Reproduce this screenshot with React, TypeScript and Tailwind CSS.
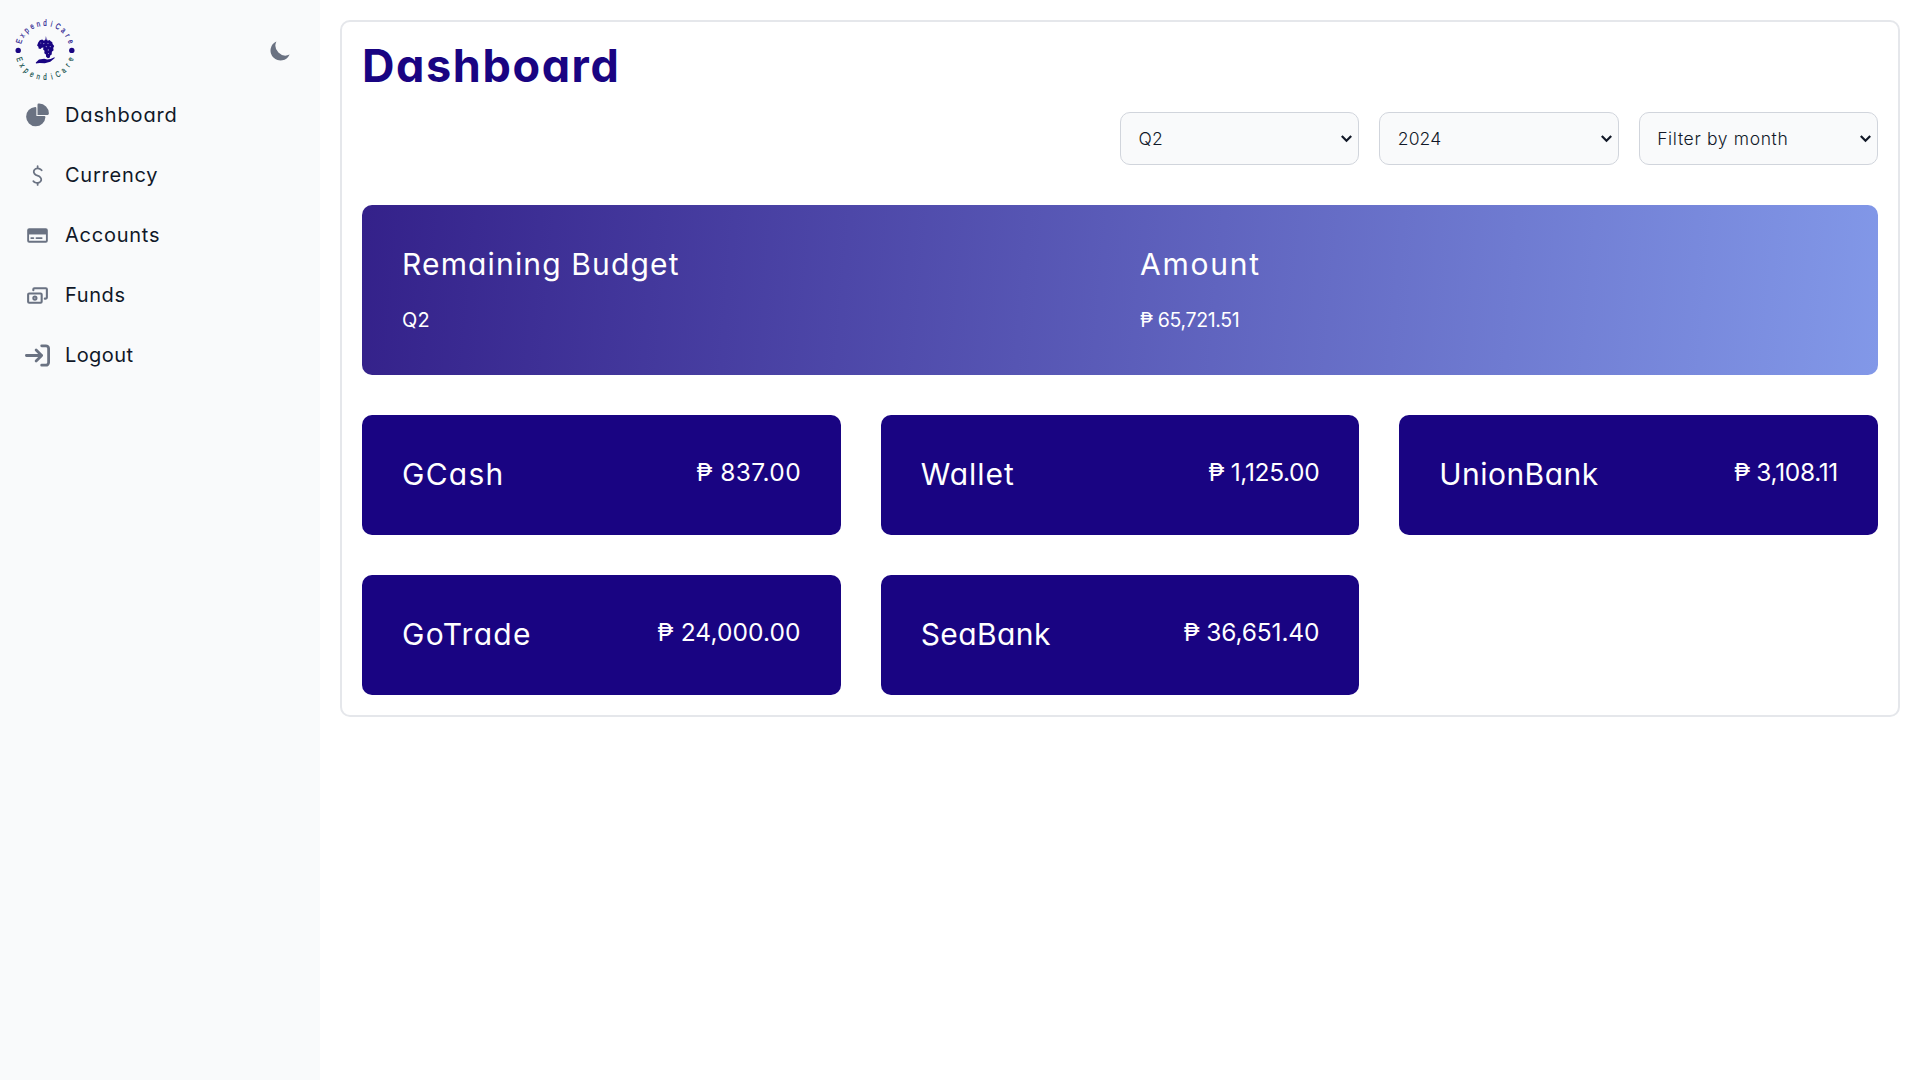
import type { ReactNode } from "react";

const stroke = {
  fill: "none",
  stroke: "currentColor",
  strokeLinecap: "round" as const,
  strokeLinejoin: "round" as const,
  strokeWidth: 2,
};

const brand = "ExpendiCare".split("");

function Logo() {
  return (
    <svg viewBox="0 0 70 70" className="h-[70px] w-[70px] font-['Liberation_Sans',sans-serif]">
      {brand.map((letter, i) => (
        <text
          key={`top-${i}`}
          fontSize="8.2"
          fill="#2c1c90"
          stroke="#2c1c90"
          strokeWidth="0.2"
          textAnchor="middle"
          transform={`translate(35 35.4) rotate(${(i - 5) * 14.2}) translate(0 -24.6) scale(0.76 1)`}
        >
          {letter}
        </text>
      ))}
      {brand.map((letter, i) => (
        <text
          key={`bottom-${i}`}
          fontSize="8.2"
          fill="#15524e"
          stroke="#15524e"
          strokeWidth="0.2"
          textAnchor="middle"
          transform={`translate(35 35.4) rotate(${(5 - i) * 14.2}) translate(0 29.8) scale(0.76 1)`}
        >
          {letter}
        </text>
      ))}
      <circle cx="8.2" cy="35.4" r="2.7" fill="#190482" />
      <circle cx="61.8" cy="35.4" r="2.7" fill="#190482" />
      <g fill="#190482">
        <path d="M34.2 27 L35.8 21 L38.2 26.5 Z" opacity=".45" />
        <path d="M28.2 27.5l1.6-2.3 2.4-.6 1.8 1.2 2-1.6 1.6 1.5 2-.7 1.4 1.6 1.2.4.4 2.1 1.6 1.8-1 2 .4 2.4-1.7 1.5-.2 2.6-1.5 1-.4 2.1-1.9.8-1.8-1.5-.2-2.2-1.6-1.4.2-2.4-1.4-1.2.3-2.1-1.6.3-1.3 1.3-1.9-.6-.2-1.8-1.3-1.2z" />
        <path d="M25.8 47.4l3.2-3 5.2-.7 3 .8 3.3-.5 4-1.8.3.8-4.5 3.7-5.5 1.5-5.2-.3-3.6.6z" />
      </g>
      <g fill="#f9fafb" opacity=".6">
        <circle cx="33.8" cy="28.6" r=".7" />
        <circle cx="38" cy="28.3" r=".6" />
        <circle cx="36.3" cy="31.6" r=".65" />
        <circle cx="40.3" cy="31.6" r=".65" />
        <circle cx="38.3" cy="35" r=".65" />
        <circle cx="38.5" cy="38.4" r=".5" />
        <circle cx="30.8" cy="28" r=".5" />
      </g>
    </svg>
  );
}

const navItems: { label: string; tracking: string; icon: ReactNode }[] = [
  {
    label: "Dashboard",
    tracking: "tracking-[0.85px]",
    icon: (
      <svg viewBox="0 0 22 21" fill="currentColor" className="size-[25px]">
        <path d="M16.975 11H10V4.025a1 1 0 0 0-1.066-.998 8.5 8.5 0 1 0 9.039 9.039.999.999 0 0 0-1-1.066h.002Z" />
        <path d="M12.5 0c-.157 0-.311.01-.565.027A1 1 0 0 0 11 1.02V10h8.975a1 1 0 0 0 1-.935c.013-.188.028-.374.028-.565A8.51 8.51 0 0 0 12.5 0Z" />
      </svg>
    ),
  },
  {
    label: "Currency",
    tracking: "tracking-[0.75px]",
    icon: (
      <svg viewBox="0 0 24 24" className="size-[25px]">
        <path {...stroke} strokeWidth={1.7} d="M8 17.345a4.76 4.76 0 0 0 2.558 1.618c2.274.589 4.512-.446 4.999-2.31.487-1.866-1.273-3.9-3.546-4.49-2.273-.59-4.034-2.623-3.547-4.488.486-1.865 2.724-2.899 4.998-2.31.982.236 1.87.793 2.538 1.592m-3.879 12.171V21m0-18v2.2" />
      </svg>
    ),
  },
  {
    label: "Accounts",
    tracking: "tracking-[0.75px]",
    icon: (
      <svg viewBox="0 0 24 24" className="size-[25px]">
        <path {...stroke} strokeWidth={1.8} d="M6 14.5h2m3 0h5M3 7v10a1 1 0 0 0 1 1h16a1 1 0 0 0 1-1V7a1 1 0 0 0-1-1H4a1 1 0 0 0-1 1Z" />
        <path fill="currentColor" d="M3 6h18v5H3z" />
      </svg>
    ),
  },
  {
    label: "Funds",
    tracking: "tracking-[0.6px]",
    icon: (
      <svg viewBox="0 0 24 24" className="size-[25px]">
        <path {...stroke} d="M8 7V6a1 1 0 0 1 1-1h11a1 1 0 0 1 1 1v8a1 1 0 0 1-1 1h-1M3 18v-7a1 1 0 0 1 1-1h11a1 1 0 0 1 1 1v7a1 1 0 0 1-1 1H4a1 1 0 0 1-1-1Zm8-3.5a1.5 1.5 0 1 1-3 0 1.5 1.5 0 0 1 3 0Z" />
      </svg>
    ),
  },
  {
    label: "Logout",
    tracking: "tracking-[0.4px]",
    icon: (
      <svg viewBox="0 0 18 16" className="size-[25px]">
        <path {...stroke} d="M1 8h11m0 0L8 4m4 4-4 4m4-11h3a2 2 0 0 1 2 2v10a2 2 0 0 1-2 2h-3" />
      </svg>
    ),
  },
];

const filters = [
  { label: "Q2", tracking: "tracking-[0.3px]" },
  { label: "2024", tracking: "tracking-[0.1px]" },
  { label: "Filter by month", tracking: "tracking-[0.65px]" },
];

const accounts = [
  { name: "GCash", nameTracking: "tracking-[1.25px]", amount: "837.00", amountTracking: "tracking-[0.4px] -mr-[0.4px]" },
  { name: "Wallet", nameTracking: "tracking-[1px]", amount: "1,125.00", amountTracking: "tracking-[-0.35px]" },
  { name: "UnionBank", nameTracking: "tracking-[0.45px]", amount: "3,108.11", amountTracking: "tracking-[-0.35px]" },
  { name: "GoTrade", nameTracking: "tracking-[1.3px]", amount: "24,000.00", amountTracking: "tracking-[0.1px]" },
  { name: "SeaBank", nameTracking: "tracking-[0.4px]", amount: "36,651.40", amountTracking: "tracking-[-0.15px]" },
];

function Select({ label, tracking }: { label: string; tracking: string }) {
  return (
    <button className="flex h-[53px] items-center justify-between rounded-[10px] border border-gray-300 bg-[#f9fafb] pr-[5px] pl-[17.5px] text-left text-[17.5px] font-light text-gray-900">
      <span className={`pt-[2px] ${tracking}`}>{label}</span>
      <svg viewBox="0 0 13 9" className="h-[9px] w-[13px]">
        <path d="M1.8 2 L6.5 6.7 L11.2 2" fill="none" stroke="#111827" strokeWidth="2.2" />
      </svg>
    </button>
  );
}

export default function App() {
  return (
    <div className="flex min-h-screen bg-white font-[Inter,sans-serif] text-gray-900 [font-feature-settings:'cv11']">
      <aside className="w-80 shrink-0 bg-[#f9fafb]">
        <div className="flex h-[85px] items-end justify-between pr-[27px] pl-[10px]">
          <Logo />
          <svg viewBox="0 0 20 20" fill="currentColor" className="mb-[22px] size-[25px] text-gray-500">
            <path d="M17.293 13.293A8 8 0 016.707 2.707a8.001 8.001 0 1010.586 10.586z" />
          </svg>
        </div>
        <nav className="flex flex-col">
          {navItems.map((item) => (
            <a key={item.label} className="flex h-[60px] items-center gap-[15px] pl-[25px] text-[20px]">
              <span className="text-gray-500">{item.icon}</span>
              <span className={item.tracking}>{item.label}</span>
            </a>
          ))}
        </nav>
      </aside>

      <main className="flex-1 p-5">
        <section className="rounded-[10px] border-2 border-gray-200 p-5">
          <h1 className="text-[45px] leading-[48px] font-bold tracking-[1.6px] text-[#190482]">Dashboard</h1>

          <div className="mt-[22px] ml-auto grid w-[758px] grid-cols-3 gap-5">
            {filters.map((filter) => (
              <Select key={filter.label} {...filter} />
            ))}
          </div>

          <div className="mt-10 grid grid-cols-2 gap-x-10 gap-y-[22px] rounded-[10px] bg-linear-[95deg,#34218a,#8298e8] p-10 text-white">
            <h2 className="text-[30px] leading-[38px] tracking-[1.15px]">Remaining Budget</h2>
            <h2 className="text-[30px] leading-[38px] tracking-[1.75px]">Amount</h2>
            <p className="text-[20px] leading-[30px] tracking-[0.3px]">Q2</p>
            <p className="text-[19.5px] leading-[30px] tracking-[-0.35px]">₱ 65,721.51</p>
          </div>

          <div className="mt-10 grid grid-cols-3 gap-10">
            {accounts.map((account) => (
              <div key={account.name} className="flex h-[120px] items-start justify-between rounded-[10px] bg-[#190482] p-10 text-white">
                <h3 className={`text-[30px] leading-[38px] ${account.nameTracking}`}>{account.name}</h3>
                <p className={`text-[24.5px] leading-[35px] ${account.amountTracking}`}>₱ {account.amount}</p>
              </div>
            ))}
          </div>
        </section>
      </main>
    </div>
  );
}
